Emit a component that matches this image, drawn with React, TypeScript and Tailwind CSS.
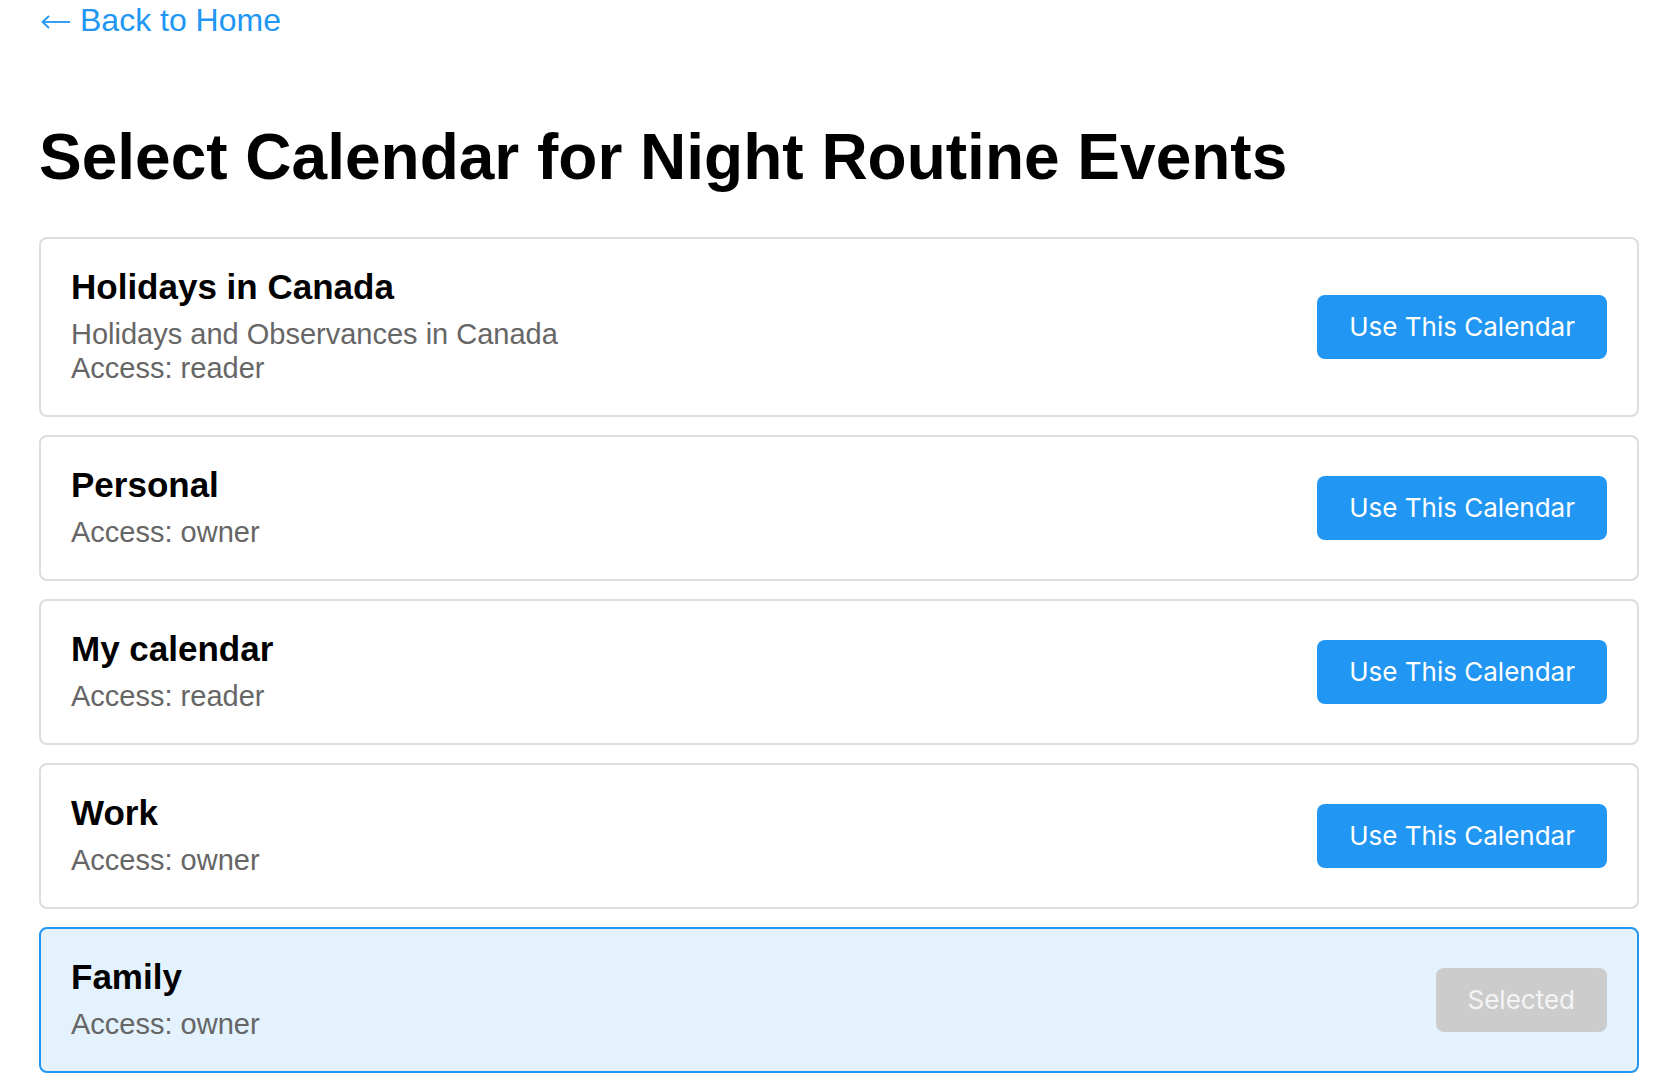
import React, { useState } from "react";

type Cal = { id: string; name: string; description?: string; access: string };

const calendars: Cal[] = [
  { id: "holidays", name: "Holidays in Canada", description: "Holidays and Observances in Canada", access: "reader" },
  { id: "personal", name: "Personal", access: "owner" },
  { id: "mine", name: "My calendar", access: "reader" },
  { id: "work", name: "Work", access: "owner" },
  { id: "family", name: "Family", access: "owner" },
];

export default function App() {
  const [selected, setSelected] = useState("family");

  return (
    <div className="min-h-screen bg-white pl-[39px] pr-[41px] pt-[2px] font-['Liberation_Sans',Arial,sans-serif] text-black">
      <a href="#" className="flex items-center gap-[9px] pl-[2px] text-[32px] leading-[37px] text-[#2196F3]">
        <svg width="30" height="14" viewBox="0 0 30 14" fill="none" stroke="currentColor" strokeWidth="1.8" className="mt-[2px]">
          <path d="M29 7H2" />
          <path d="M8 1L1.5 7L8 13" />
        </svg>
        <span>Back to Home</span>
      </a>

      <h1 className="mt-[81px] mb-[43px] text-[64px] leading-[74px] font-bold">
        Select Calendar for Night Routine Events
      </h1>

      <div className="flex flex-col gap-[18px]">
        {calendars.map((cal) => {
          const isSelected = cal.id === selected;
          return (
            <div
              key={cal.id}
              className={
                isSelected
                  ? "flex items-center justify-between rounded-[8px] border-2 border-[#2196F3] bg-[#E3F2FD] p-[30px]"
                  : "flex items-center justify-between rounded-[8px] border-2 border-[#ddd] bg-white p-[30px]"
              }
            >
              <div>
                <h3 className="mb-[12px] text-[35px] leading-[36px] font-bold">{cal.name}</h3>
                {cal.description && (
                  <p className="text-[29px] leading-[34px] text-[#666]">{cal.description}</p>
                )}
                <p className="text-[29px] leading-[34px] text-[#666]">Access: {cal.access}</p>
              </div>
              {isSelected ? (
                <button
                  disabled
                  className="rounded-[8px] bg-[#ccc] px-[32px] py-[16px] font-['Inter',sans-serif] text-[26px] leading-[32px] text-[#f4f4f4]"
                >
                  Selected
                </button>
              ) : (
                <button
                  onClick={() => setSelected(cal.id)}
                  className="rounded-[8px] bg-[#2196F3] px-[32px] py-[16px] font-['Inter',sans-serif] text-[26px] leading-[32px] text-white"
                >
                  Use This Calendar
                </button>
              )}
            </div>
          );
        })}
      </div>
    </div>
  );
}
